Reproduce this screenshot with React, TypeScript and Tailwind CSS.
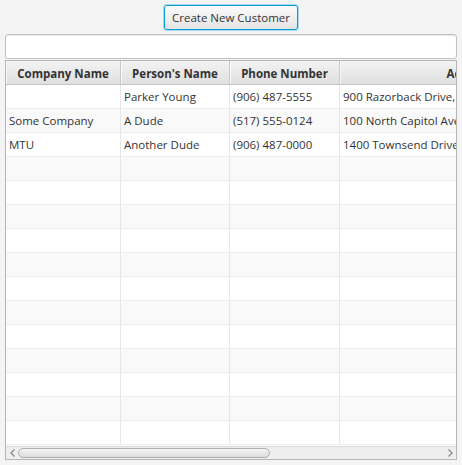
import React from "react";

const cols = [
  { title: "Company Name", w: "w-[115px]" },
  { title: "Person's Name", w: "w-[109px]" },
  { title: "Phone Number", w: "w-[110px]" },
  { title: "Address", w: "w-[260px]" },
];

const data = [
  ["", "Parker Young", "(906) 487-5555", "900 Razorback Drive, Houghton"],
  ["Some Company", "A Dude", "(517) 555-0124", "100 North Capitol Avenue"],
  ["MTU", "Another Dude", "(906) 487-0000", "1400 Townsend Drive"],
];

export default function App() {
  const rows: string[][] = [...data];
  while (rows.length < 15) rows.push(["", "", "", ""]);
  return (
    <div
      className="w-[462px] h-[465px] bg-[#f4f4f4] flex flex-col overflow-hidden text-[11.5px] text-[#333333]"
      style={{ fontFamily: '"Open Sans", "Noto Sans", sans-serif' }}
    >
      <div className="flex justify-center pt-[5px]">
        <button className="h-[25px] px-[7px] rounded-[3px] border border-[#039ed3] shadow-[0_0_0_1px_#a6d9ee] bg-gradient-to-b from-[#fbfbfb] to-[#e4e4e4] text-[11.5px] text-[#333333] leading-none">
          Create New Customer
        </button>
      </div>
      <div className="mx-[5px] mt-[4px] h-[25px] rounded-[3px] border border-[#c2c2c2] bg-white shadow-[inset_0_1px_1px_#e6e6e6]" />
      <div className="mx-[5px] mt-[1px] mb-[5px] flex-1 border border-[#b6b6b6] bg-white flex flex-col overflow-hidden">
        <div className="flex h-[24px] shrink-0 bg-gradient-to-b from-[#f3f3f3] to-[#dfdfdf] border-b border-[#c4c4c4]">
          {cols.map((c, i) => (
            <div
              key={i}
              className={`${c.w} shrink-0 h-full flex items-center justify-center pt-[2px] font-bold text-[#333333] border-r border-[#c8c8c8] shadow-[inset_1px_0_0_#fafafa]`}
            >
              {c.title}
            </div>
          ))}
        </div>
        <div className="flex-1 flex flex-col overflow-hidden">
          {rows.map((r, ri) => (
            <div
              key={ri}
              className={`flex h-[24px] shrink-0 border-b border-[#ececec] ${ri % 2 === 0 ? "bg-white" : "bg-[#f9f9f9]"}`}
            >
              {r.map((cell, ci) => (
                <div
                  key={ci}
                  className={`${cols[ci].w} shrink-0 h-full flex items-center pl-[3px] whitespace-nowrap overflow-hidden border-r border-[#e6e6e6]`}
                >
                  {cell}
                </div>
              ))}
            </div>
          ))}
        </div>
        <div className="h-[13px] shrink-0 flex items-center bg-[#eeeeee] border-t border-[#d8d8d8]">
          <div className="w-[12px] flex justify-center">
            <svg width="5" height="8" viewBox="0 0 5 8">
              <path d="M4.5 0.5 L1 4 L4.5 7.5" fill="none" stroke="#8a8a8a" strokeWidth="1.3" />
            </svg>
          </div>
          <div className="w-[252px] h-[10px] rounded-[5px] border border-[#b0b0b0] bg-gradient-to-b from-[#f5f5f5] to-[#dcdcdc]" />
          <div className="flex-1" />
          <div className="w-[12px] flex justify-center">
            <svg width="5" height="8" viewBox="0 0 5 8">
              <path d="M0.5 0.5 L4 4 L0.5 7.5" fill="none" stroke="#8a8a8a" strokeWidth="1.3" />
            </svg>
          </div>
        </div>
      </div>
    </div>
  );
}
